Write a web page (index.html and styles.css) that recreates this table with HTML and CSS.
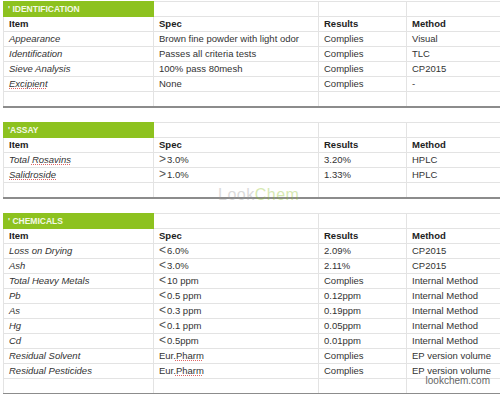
FILE: index.html
```html
<!DOCTYPE html>
<html lang="en">
<head>
<meta charset="UTF-8">
<meta name="viewport" content="width=device-width, initial-scale=1.0">
<title>Specification</title>
<link rel="stylesheet" href="styles.css">
</head>
<body>
    <div class="sheet">
        <table class="spec">
            <tr class="band"><td class="tag">' IDENTIFICATION</td><td></td><td></td><td></td></tr>
            <tr class="head"><td>Item</td><td>Spec</td><td>Results</td><td>Method</td></tr>
            <tr><td class="item">Appearance</td><td>Brown fine powder with light odor</td><td>Complies</td><td>Visual</td></tr>
            <tr><td class="item">Identification</td><td>Passes all criteria tests</td><td>Complies</td><td>TLC</td></tr>
            <tr><td class="item">Sieve Analysis</td><td>100% pass 80mesh</td><td>Complies</td><td>CP2015</td></tr>
            <tr><td class="item"><span class="typo">Excipient</span></td><td>None</td><td>Complies</td><td>-</td></tr>
            <tr class="last"><td></td><td></td><td></td><td></td></tr>
        </table>

        <table class="spec">
            <tr class="band"><td class="tag">'ASSAY</td><td></td><td></td><td></td></tr>
            <tr class="head"><td>Item</td><td>Spec</td><td>Results</td><td>Method</td></tr>
            <tr><td class="item">Total <span class="typo">Rosavins</span></td><td><span class="sym">&gt;</span>3.0%</td><td>3.20%</td><td>HPLC</td></tr>
            <tr><td class="item"><span class="typo">Salidroside</span></td><td><span class="sym">&gt;</span>1.0%</td><td>1.33%</td><td>HPLC</td></tr>
            <tr class="last"><td></td><td></td><td></td><td></td></tr>
        </table>

        <table class="spec">
            <tr class="band"><td class="tag">' CHEMICALS</td><td></td><td></td><td></td></tr>
            <tr class="head"><td>Item</td><td>Spec</td><td>Results</td><td>Method</td></tr>
            <tr><td class="item">Loss on Drying</td><td><span class="sym">&lt;</span>6.0%</td><td>2.09%</td><td>CP2015</td></tr>
            <tr><td class="item">Ash</td><td><span class="sym">&lt;</span>3.0%</td><td>2.11%</td><td>CP2015</td></tr>
            <tr><td class="item">Total Heavy Metals</td><td><span class="sym">&lt;</span>10 ppm</td><td>Complies</td><td>Internal Method</td></tr>
            <tr><td class="item">Pb</td><td><span class="sym">&lt;</span>0.5 ppm</td><td>0.12ppm</td><td>Internal Method</td></tr>
            <tr><td class="item">As</td><td><span class="sym">&lt;</span>0.3 ppm</td><td>0.19ppm</td><td>Internal Method</td></tr>
            <tr><td class="item">Hg</td><td><span class="sym">&lt;</span>0.1 ppm</td><td>0.05ppm</td><td>Internal Method</td></tr>
            <tr><td class="item">Cd</td><td><span class="sym">&lt;</span>0.5ppm</td><td>0.01ppm</td><td>Internal Method</td></tr>
            <tr><td class="item">Residual Solvent</td><td>Eur.<span class="typo">Pharm</span></td><td>Complies</td><td>EP version volume</td></tr>
            <tr><td class="item">Residual Pesticides</td><td>Eur.<span class="typo">Pharm</span></td><td>Complies</td><td>EP version volume</td></tr>
            <tr class="last"><td></td><td></td><td></td><td></td></tr>
        </table>

        <div class="mark"><span class="look">Look</span><span class="chem">Chem</span></div>
        <div class="site">lookchem.com</div>
    </div>
</body>
</html>
```

FILE: styles.css
```css
body {
    margin: 0;
    background-color: #fff;
    font-family: "Liberation Sans", Arial, sans-serif;
    font-size: 9.5px;
    color: #333;
}

.sheet {
    position: relative;
    padding: 1px 3px 0 3px;
    display: flex;
    flex-direction: column;
    gap: 14px;
}

.spec {
    width: 494px;
    border-collapse: collapse;
    table-layout: fixed;
}

.spec tr {
    height: 15px;
}

.spec td {
    height: 14px;
    padding: 0 0 0 5px;
    border: 1px solid #e3e3e3;
    line-height: 12px;
    white-space: nowrap;
    overflow: hidden;
}

.spec td:nth-child(1) { width: 145px; }
.spec td:nth-child(2) { width: 159px; }
.spec td:nth-child(3) { width: 82px; }
.spec td:nth-child(4) { width: 88px; }

.band .tag {
    background-color: #8dc21f;
    color: #f4f9e6;
    font-size: 8.5px;
    font-weight: bold;
    border-color: #8dc21f;
    padding-left: 4px;
}

.head td {
    font-weight: bold;
    color: #222;
}

.item {
    font-style: italic;
}

.typo {
    text-decoration: underline dotted #d66;
    text-decoration-thickness: 1px;
    text-underline-offset: 1px;
}

.sym {
    font-size: 12px;
    line-height: 10px;
    color: #555;
    margin-right: 1px;
}

.last td {
    border-bottom: 2px solid #8c8c8c;
}

.site {
    position: absolute;
    right: 10px;
    top: 375px;
    color: #666;
    font-size: 10px;
}

.mark {
    position: absolute;
    left: 218px;
    top: 186px;
    font-size: 16px;
    letter-spacing: 0.5px;
    opacity: 0.35;
}

.look {
    color: #999;
}

.chem {
    color: #8dc21f;
}
```
